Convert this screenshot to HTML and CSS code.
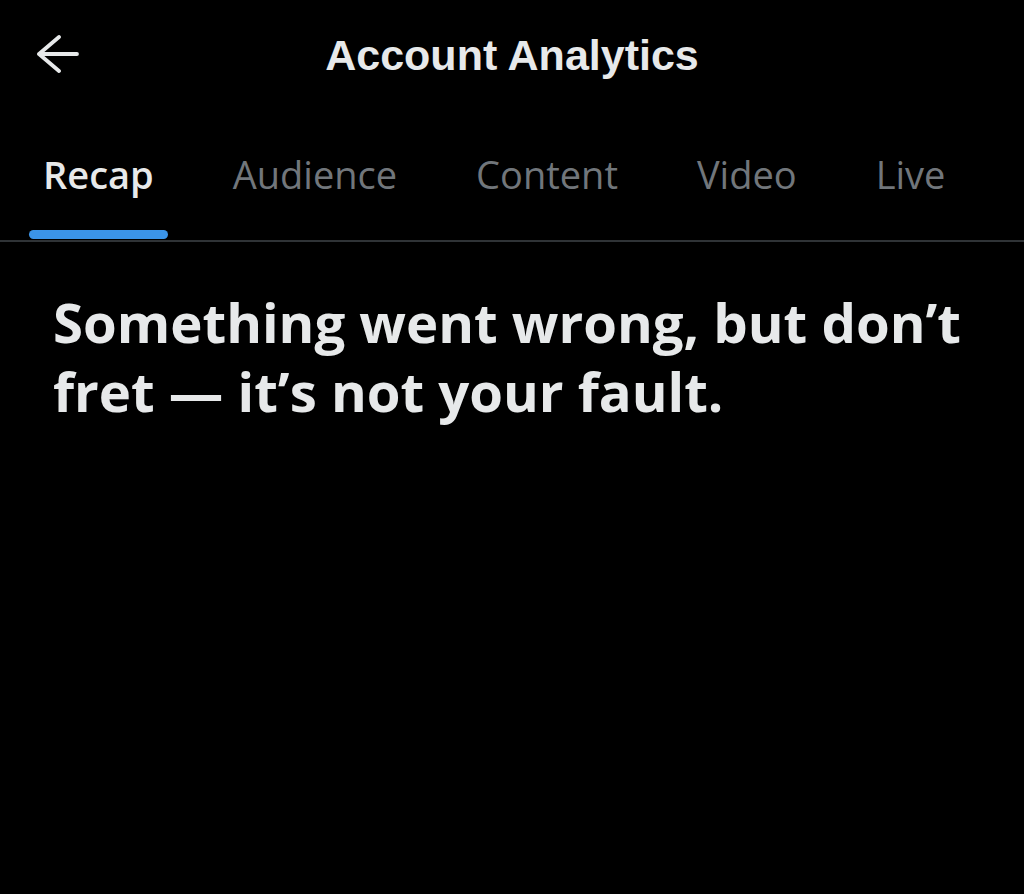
FILE: index.html
```html
<!DOCTYPE html>
<html lang="en">
<head>
<meta charset="utf-8">
<title>Account Analytics</title>
<link rel="stylesheet" href="styles.css">
</head>
<body>
<div class="app">
  <header class="topbar">
    <button class="back" aria-label="Back">
      <svg width="48" height="40" viewBox="0 0 48 40" fill="none" stroke="#e7e9ea" stroke-width="3.8" stroke-linecap="round" stroke-linejoin="round">
        <path d="M42 19H4M24 2L4 19l20 17"/>
      </svg>
    </button>
    <h1 class="title">Account Analytics</h1>
  </header>
  <nav class="tabs">
    <div class="tab active">Recap</div>
    <div class="tab">Audience</div>
    <div class="tab">Content</div>
    <div class="tab">Video</div>
    <div class="tab">Live</div>
  </nav>
  <main class="content">
    <p class="error">Something went wrong, but don’t fret — it’s not your fault.</p>
  </main>
</div>
</body>
</html>
```
FILE: styles.css
```css
html, body {
  margin: 0;
  padding: 0;
  background: #000;
}
body {
  font-family: "Open Sans", "Noto Sans", "Liberation Sans", sans-serif;
  color: #e7e9ea;
  width: 1024px;
  height: 894px;
  overflow: hidden;
}
.topbar {
  position: relative;
  height: 110px;
  display: flex;
  align-items: center;
  justify-content: center;
}
.back {
  position: absolute;
  left: 35px;
  top: 35px;
  background: none;
  border: 0;
  padding: 0;
  display: flex;
}
.title {
  margin: 0;
  font-family: "Liberation Sans", Arial, sans-serif;
  font-size: 43px;
  font-weight: 700;
  color: #e7e9ea;
}
.tabs {
  display: flex;
  height: 132px;
  border-bottom: 2px solid #2f3336;
  padding-left: 29px;
  box-sizing: border-box;
}
.tab {
  position: relative;
  font-size: 38px;
  font-weight: 500;
  color: #71767b;
  padding: 38px 14px 0;
  margin-right: 51px;
}
.tab.active {
  color: #e7e9ea;
  font-weight: 600;
}
.tab.active::after {
  content: "";
  position: absolute;
  left: 0;
  right: 0;
  bottom: 1px;
  height: 9px;
  border-radius: 5px;
  background: #3b94e8;
}
.content {
  padding: 46px 53px 0;
}
.error {
  margin: 0;
  font-size: 54.5px;
  font-weight: 700;
  line-height: 69px;
}
```
